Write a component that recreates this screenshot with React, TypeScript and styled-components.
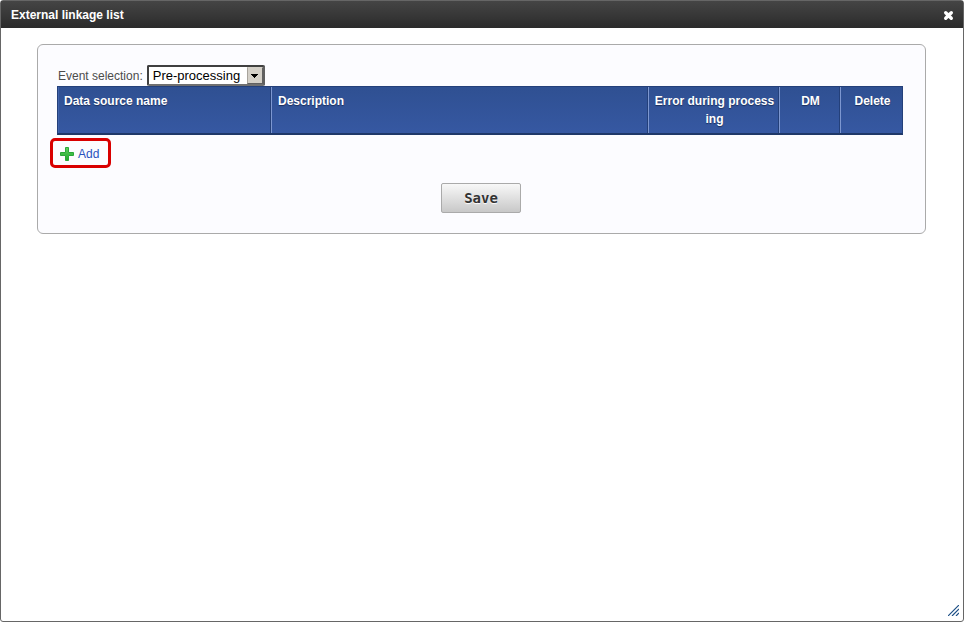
import React from "react";
import styled, { createGlobalStyle } from "styled-components";

const GlobalStyle = createGlobalStyle`
  * { box-sizing: border-box; }
  body {
    margin: 0;
    background: #fff;
    color: #444;
    font: 12px/18px "Liberation Sans", Arial, sans-serif;
  }
`;

const Dialog = styled.section`
  position: relative;
  min-height: 100vh;
  border: 1px solid #666;
  border-radius: 3px;
  background: #fff;
`;

const TitleBar = styled.header`
  display: flex;
  align-items: center;
  justify-content: space-between;
  height: 27px;
  padding: 0 8px 0 10px;
  background: linear-gradient(#454545, #2b2b2b);
`;

const Title = styled.h1`
  margin: 0;
  color: #fff;
  font-size: 12px;
  font-weight: bold;
`;

const CloseButton = styled.button`
  display: flex;
  padding: 2px 1px 0;
  border: 0;
  background: none;
  cursor: pointer;
`;

const Panel = styled.form`
  display: flex;
  flex-direction: column;
  margin: 16px 37px 0 36px;
  padding: 20px 22px 20px 19px;
  border: 1px solid #aaa;
  border-radius: 6px;
  background: #fcfcff;
`;

const EventRow = styled.div`
  display: flex;
  align-items: center;
  gap: 4px;
  padding-left: 1px;
`;

const EventLabel = styled.label`
  color: #4c4c4c;
`;

const SelectBox = styled.div`
  position: relative;
  width: 118px;
`;

const Select = styled.select`
  display: block;
  appearance: none;
  width: 100%;
  height: 21px;
  padding: 0 20px 0 4px;
  border: 2px solid #404040;
  border-right-color: #606060;
  border-bottom-color: #707070;
  border-radius: 2px;
  background: #fff;
  color: #000;
  font: 13px "Liberation Sans", Arial, sans-serif;
`;

const SelectArrow = styled.span`
  position: absolute;
  top: 2px;
  right: 2px;
  bottom: 2px;
  display: flex;
  align-items: center;
  justify-content: center;
  width: 16px;
  border: 1px solid;
  border-color: #d4d0c8 #606060 #606060 #a8a49c;
  background: #d4d0c8;
  pointer-events: none;
`;

const Table = styled.table`
  width: 100%;
  table-layout: fixed;
  border-collapse: separate;
  border-spacing: 0;
  border: 1px solid #24407a;
  border-bottom: 2px solid #1f3868;
  background: linear-gradient(#2f5092, #3658a2);
`;

const HeadCell = styled.th<{ $width?: number; $align?: string }>`
  width: ${(p) => (p.$width ? `${p.$width}px` : "auto")};
  height: 46px;
  padding: ${(p) => (p.$align ? "5px 3px 5px 5px" : "5px 6px")};
  border-left: 1px solid #7d97d0;
  border-right: 1px solid #24407a;
  color: #fff;
  font-size: 12px;
  line-height: 18px;
  text-align: ${(p) => p.$align ?? "left"};
  text-shadow: 0 1px 1px #1c2f5c;
  vertical-align: top;
  word-break: break-all;

  &:first-child { padding-left: 5px; border-left-color: #3f62ab; }
  &:last-child { border-right: 0; }
`;

const AddFrame = styled.div`
  align-self: flex-start;
  margin: 3px 0 0 -7px;
  padding: 3px 9px 3px 7px;
  border: 3px solid #d90000;
  border-radius: 5px;
`;

const AddLink = styled.a`
  display: flex;
  align-items: center;
  gap: 4px;
  height: 18px;
  padding-top: 1px;
  color: #2a52be;
  text-decoration: none;
`;

const SaveButton = styled.button`
  align-self: center;
  width: 80px;
  height: 30px;
  margin: 15px 0 0 2px;
  border: 1px solid #aaa;
  border-radius: 2px;
  background: linear-gradient(#f8f8f8, #c8c8c8);
  color: #333;
  font: bold 14px "DejaVu Sans Mono", monospace;
  text-shadow: 0 1px 1px #fff;
  cursor: pointer;
`;

const ResizeGrip = styled.svg`
  position: absolute;
  right: 4px;
  bottom: 5px;
`;

const columns = [
  { name: "Data source name", width: 213 },
  { name: "Description" },
  { name: "Error during processing", width: 131, align: "center" },
  { name: "DM", width: 61, align: "center" },
  { name: "Delete", width: 62, align: "center" },
];

export default function App() {
  return (
    <>
      <GlobalStyle />
      <Dialog role="dialog" aria-labelledby="dialog-title">
        <TitleBar>
          <Title id="dialog-title">External linkage list</Title>
          <CloseButton type="button" aria-label="Close">
            <svg width="11" height="11" viewBox="0 0 11 11">
              <path
                d="M2.700 2.700l5.600 5.600M8.300 2.700L2.700 8.300"
                stroke="#fff"
                strokeWidth="3.400"
                strokeLinecap="round"
              />
            </svg>
          </CloseButton>
        </TitleBar>
        <Panel onSubmit={(e) => e.preventDefault()}>
          <EventRow>
            <EventLabel htmlFor="event">Event selection:</EventLabel>
            <SelectBox>
              <Select id="event" defaultValue="pre">
                <option value="pre">Pre-processing</option>
              </Select>
              <SelectArrow>
                <svg width="7" height="4" viewBox="0 0 7 4" shapeRendering="crispEdges">
                  <path d="M0 0h7v1H0zM1 1h5v1H1zM2 2h3v1H2zM3 3h1v1H3z" fill="#000" />
                </svg>
              </SelectArrow>
            </SelectBox>
          </EventRow>
          <Table>
            <thead>
              <tr>
                {columns.map((c) => (
                  <HeadCell key={c.name} scope="col" $width={c.width} $align={c.align}>
                    {c.name}
                  </HeadCell>
                ))}
              </tr>
            </thead>
          </Table>
          <AddFrame>
            <AddLink href="#add">
              <svg width="14" height="14" viewBox="0 0 14 14">
                <defs>
                  <linearGradient id="plus" x1="0" y1="0" x2="0" y2="1">
                    <stop offset="0" stopColor="#5fd05f" />
                    <stop offset="1" stopColor="#1fa82c" />
                  </linearGradient>
                </defs>
                <path
                  d="M5.500.5h3v5h5v3h-5v5h-3v-5h-5v-3h5z"
                  fill="url(#plus)"
                  stroke="#2aa838"
                />
              </svg>
              Add
            </AddLink>
          </AddFrame>
          <SaveButton type="submit">Save</SaveButton>
        </Panel>
        <ResizeGrip width="11" height="11" viewBox="0 0 11 11">
          <path d="M0 11L11 0M4 11l7-7M8 11l3-3" stroke="#1d4f86" strokeWidth="1.200" fill="none" />
        </ResizeGrip>
      </Dialog>
    </>
  );
}
